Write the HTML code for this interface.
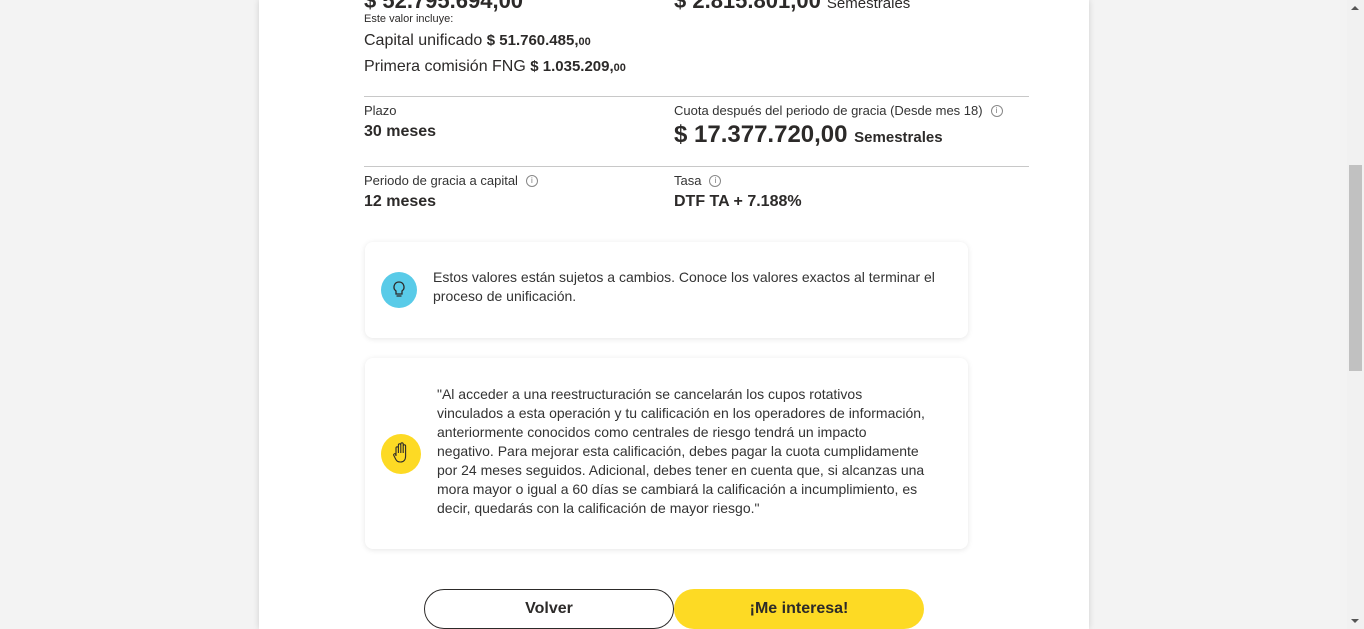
<!DOCTYPE html>
<html><head><meta charset="utf-8"><style>
*{margin:0;padding:0;box-sizing:border-box}
body{width:1364px;height:629px;overflow:hidden;background:#f3f3f3;font-family:"Liberation Sans",sans-serif;color:#2c2a29;position:relative}
.card{position:absolute;left:259px;top:0;width:830px;height:629px;background:#fff;box-shadow:0 0 6px rgba(0,0,0,.15)}
.a{position:absolute;white-space:nowrap}
.hr{position:absolute;height:1px;background:#c8c8c8;left:364px;width:665px}
.lbl{font-size:13px;color:#333}
.val{font-size:16px;font-weight:bold}
.info{display:inline-block;width:12px;height:12px;border:1px solid #888;border-radius:50%;font-size:8px;text-align:center;line-height:10px;color:#777;vertical-align:2px;margin-left:8px}
.box{position:absolute;left:365px;width:603px;background:#fff;border-radius:8px;box-shadow:0 1px 6px rgba(0,0,0,.1)}
.txt{position:absolute;font-size:14px;line-height:19px;color:#333;white-space:nowrap}
.btn{position:absolute;top:589px;height:40px;width:250px;border-radius:20px;font-size:16px;font-weight:bold;text-align:center;line-height:38px}
.sb{position:absolute;left:1347px;top:0;width:17px;height:629px;background:#f1f1f1}
</style></head><body>
<div class="card"></div>
<div class="a" style="left:364px;top:-12px;font-size:22px;font-weight:bold">$ 52.795.694,00</div>
<div class="a" style="left:674px;top:-12px;font-size:22px;font-weight:bold">$ 2.815.801,00 <span style="font-size:15px;font-weight:normal">Semestrales</span></div>
<div class="a" style="left:364px;top:13px;font-size:11px">Este valor incluye:</div>
<div class="a" style="left:364px;top:32px;font-size:16px">Capital unificado <b style="font-size:15px">$ 51.760.485,<span style="font-size:11px">00</span></b></div>
<div class="a" style="left:364px;top:58px;font-size:16px">Primera comisión FNG <b style="font-size:15px">$ 1.035.209,<span style="font-size:11px">00</span></b></div>
<div class="hr" style="top:96px"></div>
<div class="a lbl" style="left:364px;top:103px">Plazo</div>
<div class="a val" style="left:364px;top:123px">30 meses</div>
<div class="a lbl" style="left:674px;top:103px">Cuota después del periodo de gracia (Desde mes 18)<span class="info">i</span></div>
<div class="a" style="left:674px;top:121px;font-size:24px;font-weight:bold">$ 17.377.720,00 <span style="font-size:15px">Semestrales</span></div>
<div class="hr" style="top:166px"></div>
<div class="a lbl" style="left:364px;top:173px">Periodo de gracia a capital<span class="info">i</span></div>
<div class="a val" style="left:364px;top:193px">12 meses</div>
<div class="a lbl" style="left:674px;top:173px">Tasa<span class="info">i</span></div>
<div class="a val" style="left:674px;top:193px">DTF TA + 7.188%</div>
<div class="box" style="top:242px;height:96px"></div>
<div class="a" style="left:381px;top:272px;width:36px;height:36px;border-radius:50%;background:#59cbe8">
<svg width="36" height="36" viewBox="0 0 36 36"><path d="M18 10a5 5 0 0 0-3 9v3h6v-3a5 5 0 0 0-3-9z M15.5 24h5" fill="none" stroke="#2c2a29" stroke-width="1.3"/></svg></div>
<div class="txt" style="left:433px;top:268px">Estos valores están sujetos a cambios. Conoce los valores exactos al terminar el<br>proceso de unificación.</div>
<div class="box" style="top:358px;height:191px"></div>
<div class="a" style="left:381px;top:434px;width:40px;height:40px;border-radius:50%;background:#fdda24">
<svg width="40" height="40" viewBox="0 0 40 40"><path d="M15 22v-8a1.2 1.2 0 0 1 2.4 0v5v-8a1.2 1.2 0 0 1 2.4 0v8v-9a1.2 1.2 0 0 1 2.4 0v9v-7a1.2 1.2 0 0 1 2.4 0v10c0 4-2 6-5 6s-4-1-5-3l-2-4a1.2 1.2 0 0 1 2-1z" fill="none" stroke="#2c2a29" stroke-width="1.1"/></svg></div>
<div class="txt" style="left:437px;top:385px">"Al acceder a una reestructuración se cancelarán los cupos rotativos<br>vinculados a esta operación y tu calificación en los operadores de información,<br>anteriormente conocidos como centrales de riesgo tendrá un impacto<br>negativo. Para mejorar esta calificación, debes pagar la cuota cumplidamente<br>por 24 meses seguidos. Adicional, debes tener en cuenta que, si alcanzas una<br>mora mayor o igual a 60 días se cambiará la calificación a incumplimiento, es<br>decir, quedarás con la calificación de mayor riesgo."</div>
<div class="btn" style="left:424px;border:1px solid #2c2a29;background:#fff">Volver</div>
<div class="btn" style="left:674px;background:#fdda24;line-height:40px">¡Me interesa!</div>
<div class="sb"><div style="position:absolute;left:2px;top:165px;width:13px;height:206px;background:#c1c1c1"></div>
<div style="position:absolute;left:4px;top:6px;border:4px solid transparent;border-bottom:4px solid #555;border-top:0"></div>
<div style="position:absolute;left:4px;top:619px;border:4px solid transparent;border-top:4px solid #555;border-bottom:0"></div></div>
</body></html>
